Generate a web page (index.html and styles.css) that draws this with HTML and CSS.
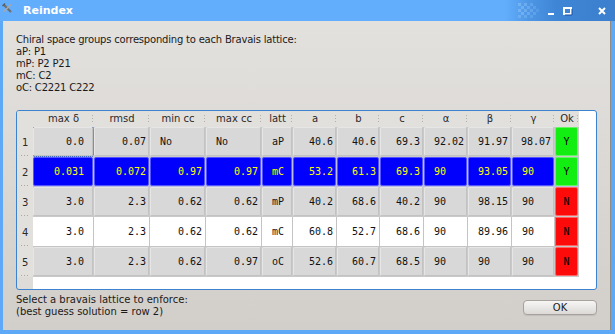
FILE: index.html
```html
<!DOCTYPE html>
<html>
<head>
<meta charset="utf-8">
<title>Reindex</title>
<link rel="stylesheet" href="styles.css">
</head>
<body>
<div class="window">
  <div class="titlebar">
    <svg class="app-icon" width="11" height="11" viewBox="0 0 11 11">
      <path d="M1.5 1.5 L9 9" stroke="#6e6e6e" stroke-width="2.2" fill="none"/>
      <path d="M9 1.5 L2 8.5" stroke="#a8a8a8" stroke-width="1.6" fill="none"/>
      <path d="M0.5 3 L3 0.5" stroke="#5a5a5a" stroke-width="1.2" fill="none"/>
    </svg>
    <span class="title">Reindex</span>
    <svg class="wm" width="98" height="21" viewBox="0 0 98 21">
      <g fill="#8cc2f8">
        <rect x="1" y="3" width="3" height="3" opacity=".55"/>
        <rect x="7" y="3" width="3" height="3" opacity=".45"/>
        <rect x="4" y="6" width="3" height="3" opacity=".5"/>
        <rect x="10" y="6" width="3" height="3" opacity=".4"/>
        <rect x="1" y="9" width="3" height="3" opacity=".55"/>
        <rect x="7" y="9" width="3" height="3" opacity=".45"/>
        <rect x="13" y="9" width="3" height="3" opacity=".35"/>
        <rect x="4" y="12" width="3" height="3" opacity=".5"/>
        <rect x="10" y="12" width="3" height="3" opacity=".4"/>
        <rect x="16" y="12" width="3" height="3" opacity=".3"/>
        <rect x="13" y="3" width="3" height="3" opacity=".3"/>
        <rect x="16" y="6" width="3" height="3" opacity=".25"/>
        <rect x="19" y="9" width="3" height="3" opacity=".2"/>
        <rect x="1" y="15" width="3" height="3" opacity=".45"/>
        <rect x="7" y="15" width="3" height="3" opacity=".35"/>
        <rect x="13" y="15" width="3" height="3" opacity=".25"/>
      </g>
      <rect x="31" y="13" width="6" height="2" fill="#ffffff"/>
      <rect x="47" y="8" width="7" height="6" fill="none" stroke="#ffffff" stroke-width="2"/>
      <path d="M55 9 V15 H48" stroke="#1a4fa0" stroke-width="1" fill="none"/>
      <path d="M82 8 L88 14 M88 8 L82 14" stroke="#ffffff" stroke-width="2" fill="none"/>
    </svg>
  </div>
  <div class="body">
    <div class="info">
      <div>Chiral space groups corresponding to each Bravais lattice:</div>
      <div>aP: P1</div>
      <div>mP: P2 P21</div>
      <div>mC: C2</div>
      <div>oC: C2221 C222</div>
    </div>
    <div class="frame">
      <table class="grid">
        <colgroup>
          <col class="w16"><col class="w61"><col class="w56"><col class="w56"><col class="w56"><col class="w31">
          <col class="w44"><col class="w43"><col class="w44"><col class="w44"><col class="w44"><col class="w43"><col class="w24">
        </colgroup>
        <thead>
          <tr>
            <th class="corner"></th>
            <th class="hd">max δ</th><th class="hd">rmsd</th><th class="hd">min cc</th><th class="hd">max cc</th>
            <th class="hd">latt</th><th class="hd">a</th><th class="hd">b</th><th class="hd">c</th>
            <th class="hd">α</th><th class="hd">β</th><th class="hd">γ</th><th class="hd">Ok</th>
          </tr>
        </thead>
        <tbody>
          <tr class="gray">
            <th class="rowhead">1</th>
            <td><div class="cell r pd focus">0.0</div></td>
            <td><div class="cell r">0.07</div></td>
            <td><div class="cell l">No</div></td>
            <td><div class="cell l">No</div></td>
            <td><div class="cell l">aP</div></td>
            <td><div class="cell r">40.6</div></td>
            <td><div class="cell r">40.6</div></td>
            <td><div class="cell r">69.3</div></td>
            <td><div class="cell r">92.02</div></td>
            <td><div class="cell r">91.97</div></td>
            <td><div class="cell r">98.07</div></td>
            <td><div class="cell c yes">Y</div></td>
          </tr>
          <tr class="sel">
            <th class="rowhead">2</th>
            <td><div class="cell r pd">0.031</div></td>
            <td><div class="cell r">0.072</div></td>
            <td><div class="cell r">0.97</div></td>
            <td><div class="cell r">0.97</div></td>
            <td><div class="cell l">mC</div></td>
            <td><div class="cell r">53.2</div></td>
            <td><div class="cell r">61.3</div></td>
            <td><div class="cell r">69.3</div></td>
            <td><div class="cell l">90</div></td>
            <td><div class="cell r">93.05</div></td>
            <td><div class="cell l">90</div></td>
            <td><div class="cell c yes">Y</div></td>
          </tr>
          <tr class="gray">
            <th class="rowhead">3</th>
            <td><div class="cell r pd">3.0</div></td>
            <td><div class="cell r">2.3</div></td>
            <td><div class="cell r">0.62</div></td>
            <td><div class="cell r">0.62</div></td>
            <td><div class="cell l">mP</div></td>
            <td><div class="cell r">40.2</div></td>
            <td><div class="cell r">68.6</div></td>
            <td><div class="cell r">40.2</div></td>
            <td><div class="cell l">90</div></td>
            <td><div class="cell r">98.15</div></td>
            <td><div class="cell l">90</div></td>
            <td><div class="cell c no">N</div></td>
          </tr>
          <tr class="white">
            <th class="rowhead">4</th>
            <td><div class="cell r pd">3.0</div></td>
            <td><div class="cell r">2.3</div></td>
            <td><div class="cell r">0.62</div></td>
            <td><div class="cell r">0.62</div></td>
            <td><div class="cell l">mC</div></td>
            <td><div class="cell r">60.8</div></td>
            <td><div class="cell r">52.7</div></td>
            <td><div class="cell r">68.6</div></td>
            <td><div class="cell l">90</div></td>
            <td><div class="cell r">89.96</div></td>
            <td><div class="cell l">90</div></td>
            <td><div class="cell c no">N</div></td>
          </tr>
          <tr class="gray">
            <th class="rowhead">5</th>
            <td><div class="cell r pd">3.0</div></td>
            <td><div class="cell r">2.3</div></td>
            <td><div class="cell r">0.62</div></td>
            <td><div class="cell r">0.97</div></td>
            <td><div class="cell l">oC</div></td>
            <td><div class="cell r">52.6</div></td>
            <td><div class="cell r">60.7</div></td>
            <td><div class="cell r">68.5</div></td>
            <td><div class="cell l">90</div></td>
            <td><div class="cell l">90</div></td>
            <td><div class="cell l">90</div></td>
            <td><div class="cell c no">N</div></td>
          </tr>
        </tbody>
      </table>
    </div>
    <div class="footer">
      <div class="hint">
        <div>Select a bravais lattice to enforce:</div>
        <div>(best guess solution = row 2)</div>
      </div>
      <button class="ok">OK</button>
    </div>
  </div>
</div>
</body>
</html>
```

FILE: styles.css
```css
html, body {
  margin: 0;
  padding: 0;
}
body {
  width: 615px;
  height: 334px;
  overflow: hidden;
  font-family: "DejaVu Sans", "Liberation Sans", sans-serif;
  font-size: 10px;
  color: #1a1a1a;
  background: #d4d0cc;
}
.window {
  width: 615px;
  height: 334px;
  display: flex;
  flex-direction: column;
}
.titlebar {
  height: 21px;
  flex: none;
  display: flex;
  align-items: center;
  background: linear-gradient(to right, #62aefd 0, #62aefd 505px, #4e97e6 528px, #3f86d6 555px, #3b7fcd 100%);
}
.app-icon {
  align-self: flex-start;
  margin: 3px 0 0 2px;
}
.title {
  margin-left: 10px;
  color: #ffffff;
  font-weight: bold;
  font-size: 11px;
  line-height: 21px;
}
.wm {
  margin-left: auto;
  display: block;
}
.body {
  flex: 1;
  display: flex;
  flex-direction: column;
  border-style: solid;
  border-color: #5ea8f8;
  border-width: 0 4px 4px 3px;
  padding: 13px 14px 12px 13px;
  background: linear-gradient(#e3e1de, #d2cecA);
  box-shadow: inset -1px 0 0 #8f8c88;
}
.info {
  line-height: 12px;
  letter-spacing: -0.2px;
}
.frame {
  margin-top: 16px;
  height: 180px;
  box-sizing: border-box;
  border: 1px solid #3b82d0;
  border-radius: 3px;
  overflow: hidden;
  background: linear-gradient(to right, #dedcd9 16px, #ffffff 16px);
}
.grid {
  border-collapse: separate;
  border-spacing: 0;
  table-layout: fixed;
  width: 562px;
}
.w16 { width: 16px; }
.w24 { width: 24px; }
.w31 { width: 31px; }
.w43 { width: 43px; }
.w44 { width: 44px; }
.w56 { width: 56px; }
.w61 { width: 61px; }

.grid th {
  padding: 0;
  font-weight: normal;
  color: #2a2a2a;
  background: #e2e0dd;
  position: relative;
}
.grid thead th {
  height: 16px;
  line-height: 16px;
  text-align: center;
  font-size: 10px;
}
.grid thead th.hd::after {
  content: "";
  position: absolute;
  right: 1px;
  top: 4px;
  width: 1px;
  height: 9px;
  background: repeating-linear-gradient(to bottom, #b3b0ac 0 1px, transparent 1px 3px);
}
.grid th.rowhead {
  text-align: left;
  padding-left: 5px;
  box-sizing: border-box;
  height: 30px;
  font-size: 10px;
}
.grid th.rowhead::after {
  content: "";
  position: absolute;
  left: 4px;
  bottom: 1px;
  width: 9px;
  height: 1px;
  background: repeating-linear-gradient(to right, #aaa7a3 0 1px, transparent 1px 3px);
}
.grid td {
  padding: 0 1px 1px 0;
  height: 30px;
  box-sizing: border-box;
}
.cell {
  height: 29px;
  box-sizing: border-box;
  border: 1px solid;
  border-radius: 2px;
  display: flex;
  align-items: center;
  padding: 0 2px 0 9px;
  font-family: "DejaVu Sans Mono", "Liberation Mono", monospace;
  font-size: 10px;
  white-space: nowrap;
}
.cell.r { justify-content: flex-end; }
.cell.l { justify-content: flex-start; }
.cell.c { justify-content: center; padding: 0; }
.cell.pd { padding-right: 8px; }
.cell.focus {
  outline: 1px dotted #2155b5;
  outline-offset: 0;
}

tr.gray td { background: #c9c9c9; }
tr.gray .cell {
  background: #d8d8d8;
  border-color: #e6e6e6 #c2c2c2 #c2c2c2 #e6e6e6;
  color: #111;
}
tr.sel td { background: #bcbce6; }
tr.sel .cell {
  background: #0000fc;
  border-color: #5555ff;
  color: #ffff00;
}
tr.white td { background: #c4c4c4; }
tr.white .cell {
  background: #ffffff;
  border-color: #ffffff;
  border-radius: 0;
  color: #111;
}
tr .cell.yes {
  background: #12ee12;
  border-color: #66f466;
  color: #000;
}
tr .cell.no {
  background: #fd0b0b;
  border-color: #ff6464;
  color: #000;
}

.footer {
  margin-top: 4px;
  display: flex;
  align-items: center;
  justify-content: space-between;
  line-height: 12px;
}
.ok {
  width: 74px;
  height: 15px;
  margin-top: 2px;
  padding: 0;
  box-sizing: border-box;
  border: 1px solid #a6a39f;
  border-radius: 4px;
  background: linear-gradient(#f7f6f5, #dcd9d6);
  font-family: "DejaVu Sans", sans-serif;
  font-size: 10px;
  line-height: 13px;
  color: #222;
  box-shadow: 0 1px 0 rgba(0,0,0,0.08);
}
```
